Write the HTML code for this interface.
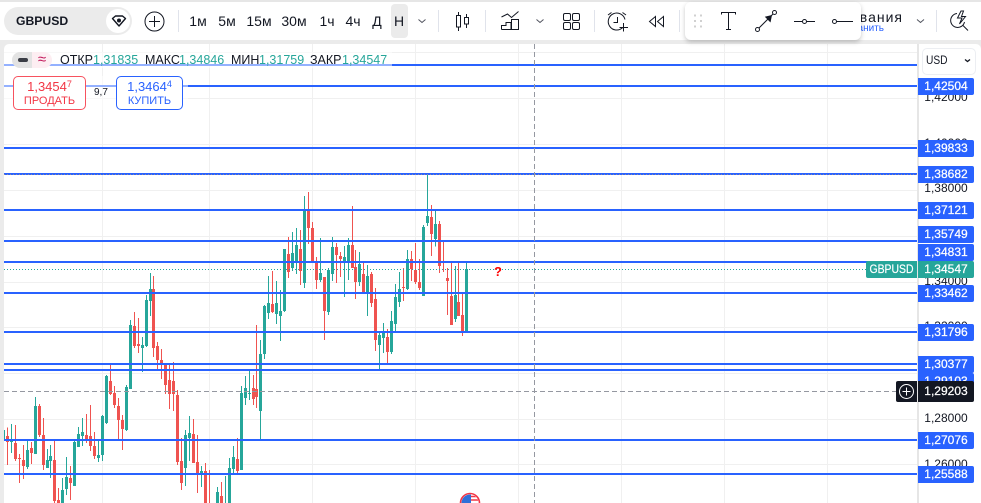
<!DOCTYPE html>
<html><head><meta charset="utf-8"><style>
html,body{margin:0;padding:0}
body{width:981px;height:503px;overflow:hidden;position:relative;background:#ebebeb;font-family:"Liberation Sans",sans-serif;color:#131722}
div,span{position:absolute;white-space:nowrap}
.tf{top:12px;height:18px;line-height:18px;width:40px;text-align:center;font-size:14px}
.sep{width:1px;top:10px;height:22px;background:#e0e3eb}
.gv{width:1px;top:44px;bottom:0;background:#f0f0f0}
.gh{height:1px;left:4px;width:913px;background:#f0f0f0}
.ln{height:2px;left:4px;width:913px;background:#2962ff}
.ax{left:918px;width:56px;text-align:center;font-size:12px;height:17px;line-height:17px;color:#131722}
.lb{left:918px;width:56px;text-align:center;font-size:12px;height:17px;line-height:17px;color:#fff;background:#2962ff;border-radius:0 2px 2px 0;-webkit-text-stroke:.25px #fff}
.lg{top:52px;height:16px;line-height:16px;font-size:12.5px}
.v{color:#26a69a}
sup{font-size:9px;line-height:0;vertical-align:4px}
svg{position:absolute;left:0;top:0;overflow:visible}
</style></head><body>
<div style="left:0;top:2px;width:981px;height:38px;background:#fff"></div>
<div style="left:0;top:0;width:981px;height:2px;background:#e6e6e6"></div>

<!-- toolbar -->
<div style="left:4px;top:7px;width:128px;height:28px;border-radius:14px;background:#ebebeb"></div>
<div style="left:16px;top:12px;height:18px;line-height:18px;font-size:12.2px;font-weight:bold">GBPUSD</div>
<div style="left:106px;top:9px;width:24px;height:24px;border-radius:12px;background:#fff"></div>
<div class="sep" style="left:178px"></div>
<div style="left:391px;top:4px;width:17px;height:34px;border-radius:4px;background:#ebebeb"></div>
<div class="tf" style="left:178px">1м</div>
<div class="tf" style="left:207px">5м</div>
<div class="tf" style="left:239px">15м</div>
<div class="tf" style="left:274px">30м</div>
<div class="tf" style="left:307px">1ч</div>
<div class="tf" style="left:333px">4ч</div>
<div class="tf" style="left:357px">Д</div>
<div class="tf" style="left:379px">Н</div>
<div class="sep" style="left:438px"></div>
<div class="sep" style="left:485px"></div>
<div class="sep" style="left:594px"></div>
<div class="sep" style="left:679px"></div>
<div class="sep" style="left:936px"></div>
<div style="left:851px;top:8px;height:18px;line-height:18px;font-size:14px;letter-spacing:1px">ования</div>
<div style="left:847px;top:23px;height:12px;line-height:12px;font-size:10px;color:#2962ff">хранить</div>

<!-- chart -->
<div style="left:4px;top:44px;width:977px;height:459px;background:#fff;border-radius:5px 5px 0 0"></div>
<div class="gv" style="left:102px"></div><div class="gv" style="left:209px"></div><div class="gv" style="left:312px"></div><div class="gv" style="left:415px"></div><div class="gv" style="left:518px"></div><div class="gv" style="left:621px"></div><div class="gv" style="left:724px"></div><div class="gv" style="left:827px"></div>
<div class="gh" style="top:52px"></div><div class="gh" style="top:98px"></div><div class="gh" style="top:144px"></div><div class="gh" style="top:190px"></div><div class="gh" style="top:236px"></div><div class="gh" style="top:282px"></div><div class="gh" style="top:327px"></div><div class="gh" style="top:373px"></div><div class="gh" style="top:419px"></div><div class="gh" style="top:464px"></div>

<svg width="981" height="503" viewBox="0 0 981 503" shape-rendering="crispEdges" fill="none">
<g transform="translate(.1667,260) scale(.33333)">
<path stroke="#26a69a" stroke-width="3" d="M13 510V540M34 492V579M82 537V627M106 411V582M142 567V624M151 555V654M187 654V729M199 591V705M223 537V678M235 501V561M247 474V558M295 540V606M307 465V603M319 345V492M379 375V513M391 180V387M427 231V336M439 105V261M451 39V168M556 510V678M568 468V603M604 618V681M652 681V729M676 648V729M688 594V729M700 558V640M724 378V630M736 348V435M748 330V420"/>
<path stroke="#26a69a" stroke-width="9" d="M34 540V546M82 570V621M106 438V582M142 600V624M151 588V603M187 690V729M199 651V687M223 546V678M235 522V561M247 516V528M295 585V594M307 468V585M319 348V489M379 381V510M391 195V387M427 255V264M439 120V258M451 87V123M556 525V624M568 519V534M604 633V645M652 696V729M688 624V729M700 591V627M724 399V630M736 384V414M748 399V402"/>
<path stroke="#ef5350" stroke-width="3" d="M22 502V615M46 495V603M58 582V669M70 555V657M94 546V612M118 432V531M130 474V630M163 537V729M175 684V729M211 618V720M259 462V549M271 435V573M283 516V597M331 309V405M343 378V444M355 414V540M367 465V570M403 156V264M415 174V279M460 48V291M472 246V327M484 267V357M496 309V402M508 309V447M520 306V453M532 390V615M544 534V690M580 477V609M592 525V699M616 609V729M628 630V729M664 666V729M712 534V640M760 345V435"/>
<path stroke="#ef5350" stroke-width="9" d="M22 528V546M46 549V597M58 594V597M70 600V618M94 564V579M118 438V525M130 525V615M163 600V723M175 720V729M211 654V669M259 525V540M271 528V558M283 558V588M331 363V402M343 399V435M355 438V480M367 480V507M403 198V258M415 252V258M460 87V264M472 258V300M484 300V309M496 312V375M508 360V402M520 363V402M532 405V606M544 603V669M580 522V609M592 606V642M616 633V729M664 708V729M712 597V633M760 384V417"/>
</g>
<g transform="translate(250.1667,160) scale(.33333)">
<path stroke="#26a69a" stroke-width="3" d="M31 540V840M43 435V597M55 348V477M79 363V492M91 390V543M103 267V456M127 216V333M139 204V342M163 108V384M211 234V366M235 324V465M247 231V363M283 258V411M295 234V360M328 276V378M352 315V468M388 516V630M400 489V579M424 453V582M436 372V516M448 336V441M472 270V390M520 195V408M532 42V198M556 153V259M616 318V486M649 306V516"/>
<path stroke="#26a69a" stroke-width="9" d="M31 582V753M43 438V582M55 429V459M79 429V462M91 453V468M103 267V453M127 279V324M139 255V309M163 147V369M211 339V360M235 330V456M247 261V342M283 291V306M295 255V306M328 312V366M352 348V402M388 525V555M400 516V534M424 483V576M436 411V492M448 387V426M472 297V387M520 201V408M532 168V189M556 192V237M616 405V477M649 327V516"/>
<path stroke="#ef5350" stroke-width="3" d="M19 495V744M67 333V459M115 231V354M151 210V375M175 96V252M187 186V309M199 291V387M223 351V540M259 249V369M271 276V351M307 138V324M316 270V417M340 303V402M364 336V441M376 384V573M412 507V612M460 324V423M484 273V363M496 249V372M508 297V390M544 135V288M568 183V339M580 243V336M592 324V465M604 306V495M625 309V468M637 399V528"/>
<path stroke="#ef5350" stroke-width="9" d="M19 687V711M67 432V456M115 282V336M151 267V333M175 150V204M187 204V309M199 306V360M223 351V453M259 261V285M271 288V297M307 255V324M316 321V366M340 342V402M364 342V429M376 417V540M412 531V576M460 381V384M484 297V327M496 330V366M508 366V384M544 171V222M568 192V318M580 303V309M592 354V363M604 408V495M625 426V468M637 465V516"/>
</g>
</svg>

<!-- horizontal lines -->
<div class="ln" style="top:64px"></div><div class="ln" style="top:85px"></div><div class="ln" style="top:147px"></div><div class="ln" style="top:173px"></div><div class="ln" style="top:209px"></div><div class="ln" style="top:240px"></div><div class="ln" style="top:261px"></div><div class="ln" style="top:292px"></div><div class="ln" style="top:331px"></div><div class="ln" style="top:363px"></div><div class="ln" style="top:369px"></div><div class="ln" style="top:439px"></div><div class="ln" style="top:473px"></div>

<svg width="981" height="503" viewBox="0 0 981 503" fill="none" shape-rendering="crispEdges">
<path d="M4 269.5H866" stroke="#26a69a" stroke-dasharray="1 2"/>
<path d="M4 174.500H917" stroke="#8a86a0" stroke-dasharray="1 2"/>
<path d="M534.500 44V503" stroke="#9598a1" stroke-dasharray="5 3"/>
<path d="M4 391.500H896" stroke="#9598a1" stroke-dasharray="5 3"/>
</svg>
<div style="left:494px;top:264px;height:16px;line-height:16px;font-size:13px;font-weight:bold;color:#f00">?</div>

<!-- bottom event icon -->
<svg width="981" height="503" viewBox="0 0 981 503" fill="none">
<clipPath id="c"><circle cx="470" cy="503" r="8.500"/></clipPath>
<g clip-path="url(#c)"><rect x="460" y="493" width="20" height="10" fill="#fff"/><path d="M470 496.500H480M470 500H480" stroke="#f23645" stroke-width="1.500"/><rect x="460" y="493" width="11" height="10" fill="#2f6fd8"/></g>
<circle cx="470" cy="503" r="9.500" stroke="#f23645" stroke-width="1.600"/>
</svg>

<!-- legend -->
<div style="left:4px;top:52px;width:388px;height:16px;background:rgba(255,255,255,.5)"></div>
<div style="left:4px;top:76px;width:184px;height:34px;background:rgba(255,255,255,.5)"></div>
<div style="left:32px;top:52px;width:20px;height:16px;background:#fdeef2;border-radius:0 8px 8px 0"></div>
<div style="left:12px;top:52px;width:20px;height:16px;background:#e3e3e3;border-radius:8px 0 0 8px"></div>
<div style="left:18px;top:58px;width:10px;height:4px;border-radius:2px;background:#3a3d45"></div>
<div style="left:35px;top:51px;width:14px;height:16px;line-height:17px;text-align:center;font-size:15px;color:#c2185b">≈</div>
<div class="lg" style="left:60px">ОТКР</div><div class="lg v" style="left:93px">1,31835</div>
<div class="lg" style="left:145px">МАКС</div><div class="lg v" style="left:179px">1,34846</div>
<div class="lg" style="left:231px">МИН</div><div class="lg v" style="left:259px">1,31759</div>
<div class="lg" style="left:310px">ЗАКР</div><div class="lg v" style="left:342px">1,34547</div>

<div style="left:13px;top:76px;width:71px;height:32px;border:1px solid #f7525f;border-radius:5px;background:#fff;color:#f23645;text-align:center">
<span style="left:0;right:0;top:2px;height:15px;line-height:15px;font-size:13px">1,3454<sup>7</sup></span>
<span style="left:0;right:0;top:17px;height:14px;line-height:14px;font-size:11px">ПРОДАТЬ</span></div>
<div style="left:94px;top:87px;height:12px;line-height:12px;font-size:10px">9,7</div>
<div style="left:116px;top:76px;width:65px;height:32px;border:1px solid #2962ff;border-radius:5px;background:#fff;color:#2962ff;text-align:center">
<span style="left:0;right:0;top:2px;height:15px;line-height:15px;font-size:13px">1,3464<sup>4</sup></span>
<span style="left:0;right:0;top:17px;height:14px;line-height:14px;font-size:11px">КУПИТЬ</span></div>

<!-- right axis -->
<div style="left:917px;top:44px;width:2px;height:459px;background:#e6e6e6"></div>
<div style="left:922px;top:48px;width:52px;height:25px;border:1px solid #eceef2;border-radius:5px;background:#fff"></div>
<div style="left:926px;top:52px;height:17px;line-height:17px;font-size:12px;transform:scaleX(.85);transform-origin:left center">USD</div>
<div class="ax" style="top:89px">1,42000</div>
<div class="ax" style="top:135px">1,40000</div>
<div class="ax" style="top:180px">1,38000</div>
<div class="ax" style="top:273px">1,34000</div>
<div class="ax" style="top:318px">1,32000</div>
<div class="ax" style="top:410px">1,28000</div>
<div class="ax" style="top:456px">1,26000</div>
<div class="lb" style="top:78px">1,42504</div>
<div class="lb" style="top:140px">1,39833</div>
<div class="lb" style="top:166px">1,38682</div>
<div class="lb" style="top:202px">1,37121</div>
<div class="lb" style="top:226px">1,35749</div>
<div class="lb" style="top:244px">1,34831</div>
<div class="lb" style="top:285px">1,33462</div>
<div class="lb" style="top:324px">1,31796</div>
<div class="lb" style="top:356px">1,30377</div>
<div class="lb" style="top:373px">1,29103</div>
<div class="lb" style="top:432px">1,27076</div>
<div class="lb" style="top:466px">1,25588</div>
<div style="left:866px;top:261px;width:51px;height:17px;background:#26a69a;border-radius:2px 0 0 2px"></div>
<div style="left:866px;top:261px;width:51px;height:17px;line-height:17px;text-align:center;font-size:12px;color:#fff;transform:scaleX(.87);-webkit-text-stroke:.2px #fff">GBPUSD</div>
<div class="lb" style="top:261px;background:#26a69a">1,34547</div>
<div style="left:896px;top:381px;width:21px;height:21px;background:#131722;border-radius:2px 0 0 2px"></div>
<div class="lb" style="top:381px;height:21px;line-height:21px;background:#131722">1,29203</div>

<!-- floating drawing panel -->
<div style="left:685px;top:2px;width:176px;height:38px;background:#fff;border-radius:6px;box-shadow:0 2px 5px rgba(0,0,0,.22)"></div>

<!-- icons -->
<svg width="981" height="503" viewBox="0 0 981 503" fill="none" stroke="#131722" stroke-width="1">
<!-- diamond -->
<path d="M112.500 18.500 115.500 16H122.500L125.500 18.500 119 26Z" stroke-width="1.400" stroke-linejoin="round"/><circle cx="119" cy="20.500" r="2" fill="#131722" stroke="none"/>
<!-- plus -->
<circle cx="154.500" cy="21.500" r="9.500"/><path d="M149 21.500H160M154.500 16V27"/>
<!-- chevrons -->
<path d="M418.500 19.500 422 22.500 425.500 19.500M536.500 19.500 540 22.500 543.500 19.500M917 19.500 920.500 22.500 924 19.500" stroke="#50535e"/>
<path d="M965 59.500 967.500 61.500 970 59.500" stroke-width="1.300"/>
<!-- candles -->
<path d="M458.500 12V15M458.500 27V31M466.500 14V17M466.500 24V28"/><rect x="456.500" y="15.500" width="4" height="11.500"/><rect x="464.500" y="17.500" width="4" height="6.500"/>
<!-- chart type -->
<path d="M501.500 17 507.500 14 511.500 17.500 518.500 11.500"/><path d="M501.500 29.500V25.500H506V22.500H511V29.500M511 29.500V22.500M511.500 29.500V19.500H518.500V29.500ZM501.500 29.500H511"/>
<!-- layout grid -->
<rect x="563.500" y="13.500" width="7" height="7" rx="1.500"/><rect x="572.500" y="13.500" width="7" height="7" rx="1.500"/><rect x="563.500" y="22.500" width="7" height="7" rx="1.500"/><rect x="572.500" y="22.500" width="7" height="7" rx="1.500"/>
<!-- alarm -->
<path d="M622.500 27.800A8.500 8.500 0 1 1 625 19.500"/><path d="M617.500 17V22.500H613.500M608 15 611.500 12.500M622.500 12.500 626 15M623.500 23V31.500M619.500 27.500H628"/>
<!-- rewind -->
<path d="M655.500 16.500 649.500 21.500 655.500 26.500ZM663.500 16.500 657.500 21.500 663.500 26.500Z"/>
<!-- T -->
<path d="M721.500 14.500V12.500H735.500V14.500M728.500 12.500V29.500M726 29.500H731"/>
<!-- trend line -->
<circle cx="757.500" cy="29.500" r="2"/><circle cx="774.500" cy="12.500" r="2"/><path d="M759 28 773 14"/><path d="M772 15 770.500 22.500 764.800 16.800Z" fill="#131722" stroke="none"/>
<!-- rays -->
<path d="M794 21.500H802M806.500 21.500H815"/><circle cx="804.500" cy="21.500" r="2"/>
<circle cx="834.500" cy="21.500" r="2"/><path d="M836.500 21.500H853"/>
<!-- loupe -->
<path d="M957 13.500A7 7 0 1 0 964.500 22M963 25.500 968 30.500"/><path d="M961 11 957.500 18H962L959.500 24 965.500 16.500H961.500L963.500 11Z"/>
<!-- drag dots -->
<path d="M694 15.500H696M700 15.500H702M694 21H696M700 21H702M694 26.500H696M700 26.500H702" stroke="#d0d0d0" stroke-width="2"/>
<!-- crosshair plus -->
<circle cx="906.500" cy="391.500" r="7" stroke="#fff"/><path d="M902.500 391.500H910.500M906.500 387.500V395.500" stroke="#fff"/>
</svg>
</body></html>
